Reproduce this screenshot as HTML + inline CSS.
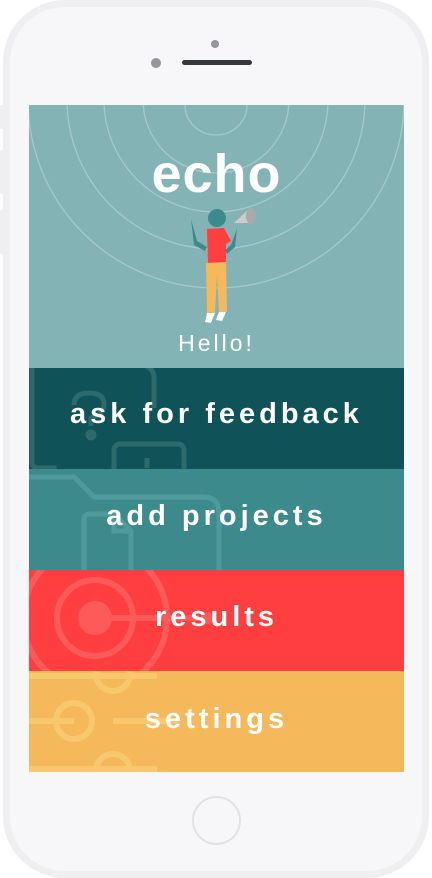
<!DOCTYPE html>
<html><head><style>
*{margin:0;padding:0;box-sizing:border-box}
body{width:432px;height:878px;background:#fff;position:relative;overflow:hidden;font-family:"Liberation Sans",sans-serif}
.phone{position:absolute;left:3px;top:0;width:426px;height:878px;border:7px solid #efeff2;border-radius:62px;background:#f7f7f9}
.btn{position:absolute;left:0;width:4px;background:#efeff2;border-radius:2px}
.screen{position:absolute;left:29px;top:105px;width:375px;height:667px;overflow:hidden}
.hdr{position:absolute;left:0;top:0;width:375px;height:263px;background:#84b3b6}
.band{position:absolute;left:0;width:375px;height:101px;color:#fff;font-weight:bold;font-size:29px;letter-spacing:4px;text-align:center;overflow:hidden}
.band span{position:relative;display:block}
</style></head><body>
<div class="phone"></div>
<div class="btn" style="top:105px;height:24px"></div>
<div class="btn" style="top:150px;height:44px"></div>
<div class="btn" style="top:210px;height:44px"></div>
<div style="position:absolute;left:211px;top:40px;width:8px;height:8px;border-radius:50%;background:#96969a"></div>
<div style="position:absolute;left:151px;top:58px;width:10px;height:10px;border-radius:50%;background:#96969a"></div>
<div style="position:absolute;left:182px;top:60px;width:70px;height:5px;border-radius:3px;background:#36383b"></div>
<div style="position:absolute;left:192px;top:796px;width:49px;height:49px;border-radius:50%;border:2px solid #e2e2e5"></div>
<div class="screen">
<div class="hdr">
<svg width="375" height="263" style="position:absolute;left:0;top:0" fill="none" stroke="#a6c9cb" stroke-width="1.3">
<ellipse cx="187" cy="0" rx="31" ry="30"/>
<circle cx="187" cy="-5" r="73"/>
<circle cx="187" cy="-5" r="112"/>
<circle cx="187" cy="-5" r="149"/>
<circle cx="187" cy="-5" r="188"/>
</svg>
<div style="position:absolute;left:0;top:38px;width:375px;text-align:center;color:#fff;font-size:54px;font-weight:bold;letter-spacing:1px">echo</div>
<svg width="375" height="263" style="position:absolute;left:0;top:0">
<path d="M162 114 L168 136 L178 142 L176 146 L165 140 Z" fill="#3d8a8c"/>
<path d="M208 124 L202 140 L196 145 L198 149 L206 142 Z" fill="#3d8a8c"/>
<circle cx="188" cy="113" r="9" fill="#3d8a8c"/>
<path d="M178 124 L195 123 L202 136 L197 139 L197 158 L179 158 Z" fill="#ff3f3f"/>
<path d="M177 158 L197 157 L198 207 L190 207 L188 170 L186 208 L178 208 Z" fill="#f5b85a"/>
<path d="M178 208 L186 208 L182 218 L176 217 Z M190 207 L197 207 L193 216 L187 215 Z" fill="#fff"/>
<path d="M205 118 L220 104 L223 118 Z" fill="#ccc"/>
<ellipse cx="222" cy="111" rx="5" ry="8" fill="#aaa"/>
</svg>
<div style="position:absolute;left:0;top:225px;width:375px;text-align:center;color:#fff;font-size:23px;letter-spacing:3px">Hello!</div>
</div>
<div class="band" style="top:263px;background:#0f5257">
<svg width="375" height="101" style="position:absolute;left:0;top:0" fill="none" stroke="#2e6a6b" stroke-width="5">
<path d="M3 0 L3 95 Q3 100 10 100 L25 100 L25 105 M100 -5 Q125 -5 125 10 L125 40"/>
<path d="M45 37 Q45 25 60 25 Q75 25 75 36 Q75 46 62 50 L62 58"/><circle cx="62" cy="67" r="3"/>
<rect x="85" y="76" width="70" height="40" rx="6"/><path d="M118 100 L118 90"/>
</svg>
<span style="top:30px">ask for feedback</span></div>
<div class="band" style="top:364px;background:#3d8a8c">
<svg width="375" height="101" style="position:absolute;left:0;top:0" fill="none" stroke="#4f9a9c" stroke-width="5">
<path d="M-5 8 L45 8 L65 28 L175 28 Q190 28 190 45 L190 105"/>
<path d="M55 105 L55 50 Q55 45 62 45 L85 45 L102 62 L102 105 M85 45 L85 62 L102 62"/>
</svg>
<span style="top:31px">add projects</span></div>
<div class="band" style="top:465px;background:#ff3f3f">
<svg width="375" height="102" style="position:absolute;left:0;top:0" fill="none" stroke="#ff5a5a" stroke-width="6">
<circle cx="66" cy="48" r="72"/><circle cx="66" cy="48" r="38"/><circle cx="66" cy="48" r="17" fill="#ff5a5a" stroke="none"/>
<path d="M82 48 L170 48"/><circle cx="178" cy="48" r="6" fill="#ff5a5a" stroke="none"/>
</svg>
<span style="top:31px">results</span></div>
<div class="band" style="top:566px;background:#f5b85a;height:101px">
<svg width="375" height="101" style="position:absolute;left:0;top:0" fill="none" stroke="#f7c86e" stroke-width="6">
<path d="M0 5 L128 5 M0 50 L45 50 M84 50 L150 50 M0 98 L128 98"/>
<circle cx="84" cy="3" r="17"/><circle cx="45" cy="50" r="18"/><circle cx="84" cy="100" r="17"/>
</svg>
<span style="top:32px">settings</span></div>
</div>
</body></html>
